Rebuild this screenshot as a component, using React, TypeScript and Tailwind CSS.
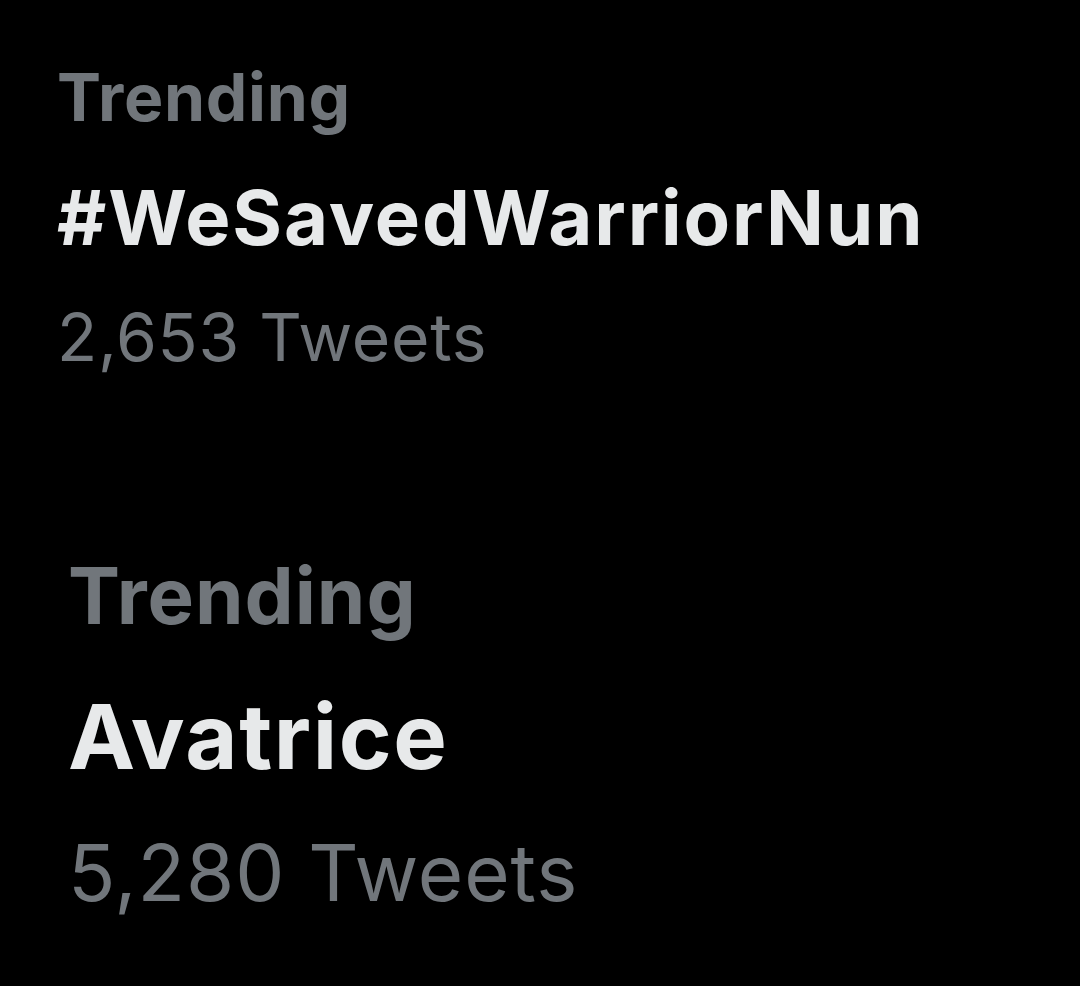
import React from "react";

export default function App() {
  return (
    <div className="w-[1080px] h-[986px] bg-black overflow-hidden" style={{ fontFamily: "Inter, 'Noto Sans', sans-serif" }}>
      <div className="pl-[57px] pt-[57px]">
        <div className="text-[66px] leading-[80px] font-bold tracking-[0.7px] text-[#71767b]">Trending</div>
        <div className="mt-[30px] text-[76px] leading-[100px] font-bold tracking-[1.9px] text-[#e7e9ea]">#WeSavedWarriorNun</div>
        <div className="mt-[30px] text-[66px] leading-[80px] font-normal tracking-[0.7px] text-[#71767b]">2,653 Tweets</div>
      </div>
      <div className="pl-[68px] mt-[171px]">
        <div className="text-[78px] leading-[95px] font-bold tracking-[1px] text-[#71767b]">Trending</div>
        <div className="mt-[39px] text-[90px] leading-[110px] font-bold tracking-[1.6px] text-[#e7e9ea]">Avatrice</div>
        <div className="mt-[33px] text-[78px] leading-[95px] font-normal tracking-[0.9px] text-[#71767b]">5,280 Tweets</div>
      </div>
    </div>
  );
}
